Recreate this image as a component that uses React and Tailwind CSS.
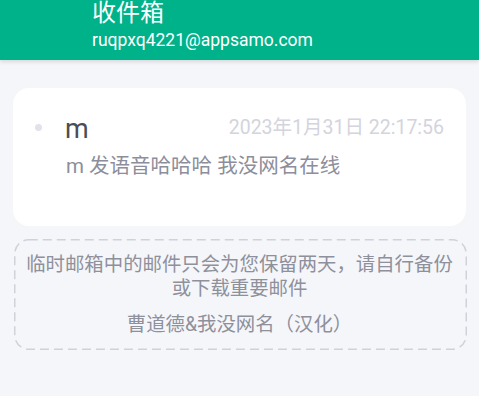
export default function App() {
  const font = { fontFamily: 'Roboto, "Noto Sans CJK SC", sans-serif' };
  return (
    <div className="w-[479px] h-[396px] bg-[#f5f6f9] overflow-hidden" style={font}>
      <div className="h-[60px] bg-[#00b28a] pl-[92px] flex flex-col shadow-[0_2px_4px_rgba(0,0,0,0.12)] relative">
        <div className="text-white text-[24px] leading-[28px] -mt-[1px]">收件箱</div>
        <div className="text-white text-[17.5px] leading-[22px] mt-[2px]">ruqpxq4221@appsamo.com</div>
      </div>
      <div className="mx-[13px] mt-[28px] h-[138px] bg-white rounded-[16px] pt-[27px] pl-[22px] pr-[22px]">
        <div className="flex items-center h-[30px]">
          <div className="w-[7px] h-[7px] rounded-full bg-[#e1e2ea] -mt-[5px]"></div>
          <div className="ml-[23px] text-[27px] leading-[30px] text-[#4a4d57] -mt-[2px]">m</div>
          <div className="ml-auto text-[19.5px] leading-[30px] text-[#d3d4dd] -mt-[5px]">2023年1月31日 22:17:56</div>
        </div>
        <div className="pl-[31px] mt-[8px] text-[20.5px] leading-[26px] text-[#8c8e9b]">m 发语音哈哈哈 我没网名在线</div>
      </div>
      <div className="relative mx-[14px] mt-[13px] h-[111px] text-center text-[#8e909c] text-[19.4px] pt-[14px]">
        <svg className="absolute inset-0" width="453" height="111">
          <rect x="0.75" y="0.75" width="451.5" height="109.5" rx="14" ry="14" fill="none" stroke="#d0d2d9" strokeWidth="1.5" strokeDasharray="9 5" />
        </svg>
        <div className="leading-[24px]">临时邮箱中的邮件只会为您保留两天，请自行备份</div>
        <div className="leading-[24px]">或下载重要邮件</div>
        <div className="leading-[24px] mt-[12px]">曹道德&amp;我没网名（汉化）</div>
      </div>
    </div>
  );
}
